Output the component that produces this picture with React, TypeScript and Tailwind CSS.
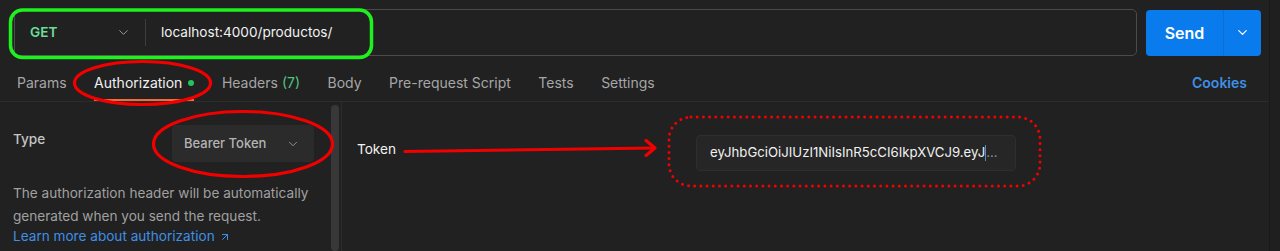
import { ChevronDown, ArrowUpRight } from "lucide-react";

const tabs = [
  { title: "Params" },
  { title: "Authorization", active: true, dot: true },
  { title: "Headers", count: "(7)" },
  { title: "Body" },
  { title: "Pre-request Script" },
  { title: "Tests" },
  { title: "Settings" },
];

// Red / green marker drawn over the screenshot
function Annotations() {
  return (
    <svg
      className="pointer-events-none absolute inset-0"
      width={1280}
      height={251}
      viewBox="0 0 1280 251"
      fill="none"
    >
      <rect x={10.5} y={10} width={361} height={47.5} rx={12} stroke="#1ff01f" strokeWidth={3.5} />
      <ellipse cx={142.5} cy={83} rx={68} ry={21.5} stroke="#f20000" strokeWidth={3.2} />
      <ellipse cx={243} cy={144} rx={89.5} ry={32.5} stroke="#f20000" strokeWidth={3.2} />
      <path d="M405 151.5 L654 148" stroke="#f20000" strokeWidth={3.2} strokeLinecap="round" />
      <path d="M646 140.5 L655 148 L646 155.5" stroke="#f20000" strokeWidth={3.2} strokeLinecap="round" strokeLinejoin="round" />
      <rect
        x={669}
        y={117}
        width={371}
        height={69}
        rx={22}
        stroke="#f20000"
        strokeWidth={3}
        strokeDasharray="0 6.2"
        strokeLinecap="round"
      />
    </svg>
  );
}

export default function App() {
  return (
    <div
      className="relative flex h-[251px] w-[1280px] overflow-hidden bg-[#212121] text-[13.6px] text-[#a6a6a6]"
      style={{ fontFamily: "Inter, 'Noto Sans', sans-serif" }}
    >
      <div className="flex w-[1269px] flex-col">
        {/* Request bar */}
        <div className="flex shrink-0 items-center gap-[9px] pl-[14px] pr-[8px] pt-[9px]">
          <div className="flex h-[47px] flex-1 items-center rounded-[5px] border border-[#4b4b4b] bg-[#212121]">
            <div className="flex w-[130px] items-center justify-between pl-[15px] pr-[14px]">
              <span className="font-semibold text-[#6bdd9a]">GET</span>
              <ChevronDown className="h-[15px] w-[15px] text-[#9a9a9a]" strokeWidth={1.6} />
            </div>
            <div className="h-[27px] w-px bg-[#3d3d3d]" />
            <span className="pl-[15px] text-[#f2f2f2]">localhost:4000/productos/</span>
          </div>
          <div className="flex h-[46px] w-[115px] items-stretch overflow-hidden rounded-[4px] bg-[#097bed] text-white">
            <div className="flex w-[77px] items-center justify-center text-[16px] font-semibold">Send</div>
            <div className="w-px bg-[#0a6fd3]" />
            <div className="flex flex-1 items-center justify-center">
              <ChevronDown className="h-[15px] w-[15px]" strokeWidth={2} />
            </div>
          </div>
        </div>

        {/* Tabs */}
        <div className="flex h-[46px] shrink-0 items-stretch border-b border-[#2c2c2c] pl-[17px] pr-[22px] text-[14px]">
          <div className="flex gap-[27.5px]">
            {tabs.map((tab) => (
              <div
                key={tab.title}
                className={
                  tab.active
                    ? "flex items-center gap-[6px] border-b-2 border-[#f26b3a] pt-[10px] text-[#f0f0f0]"
                    : "flex items-center gap-[4px] border-b-2 border-transparent pt-[10px]"
                }
              >
                <span>{tab.title}</span>
                {tab.count && <span className="text-[#4fc480]">{tab.count}</span>}
                {tab.dot && <span className="h-[6px] w-[6px] rounded-full bg-[#24c45a]" />}
              </div>
            ))}
          </div>
          <div className="ml-auto flex items-center pt-[8px] font-semibold text-[#3f8fe6]">Cookies</div>
        </div>

        {/* Body */}
        <div className="flex min-h-0 flex-1">
          <div className="w-[330px] shrink-0 pl-[13px] pr-[16px] pt-[23px]">
            <div className="flex items-start justify-between">
              <span className="mt-[4px] font-medium text-[#c4c4c4]">Type</span>
              <div className="flex h-[37px] w-[142px] items-center justify-between rounded-[4px] bg-[#2b2b2b] pl-[12px] pr-[14px]">
                <span className="text-[13px] font-medium text-[#b4b4b4]">Bearer Token</span>
                <ChevronDown className="h-[14px] w-[14px] text-[#9a9a9a]" strokeWidth={1.6} />
              </div>
            </div>
            <p className="mt-[20px] leading-[23px] text-[#a0a0a0]">
              The authorization header will be automatically generated when you send the request.
            </p>
            <a className="-mt-[3px] flex items-center gap-[4px] leading-[23px] text-[#3f8fe6]">
              Learn more about authorization
              <ArrowUpRight className="h-[12px] w-[12px]" strokeWidth={2} />
            </a>
          </div>
          <div className="w-[11px] shrink-0 pl-[1px] pt-[3px]">
            <div className="h-full w-[8px] rounded-full bg-[#383838]" />
          </div>
          <div className="flex flex-1 items-start border-l border-[#2c2c2c] pl-[15px] pt-[33px]">
            <span className="mt-[4px] w-[339px] shrink-0 text-[#f2f2f2]">Token</span>
            <div className="flex h-[36px] w-[320px] shrink-0 items-center overflow-hidden whitespace-nowrap rounded-[4px] border border-[#2e2e2e] bg-[#262626] pl-[13px] text-[13.2px]">
              <span className="text-[#f2f2f2]">eyJhbGciOiJIUzI1NiIsInR5cCI6IkpXVCJ9.eyJ</span>
              <span className="h-[16px] w-px bg-[#3f8fe6]" />
              <span className="text-[#8a8a8a]">...</span>
            </div>
          </div>
        </div>
      </div>
      <div className="flex-1 border-l border-[#191919] bg-[#1f1f1f]" />
      <Annotations />
    </div>
  );
}
